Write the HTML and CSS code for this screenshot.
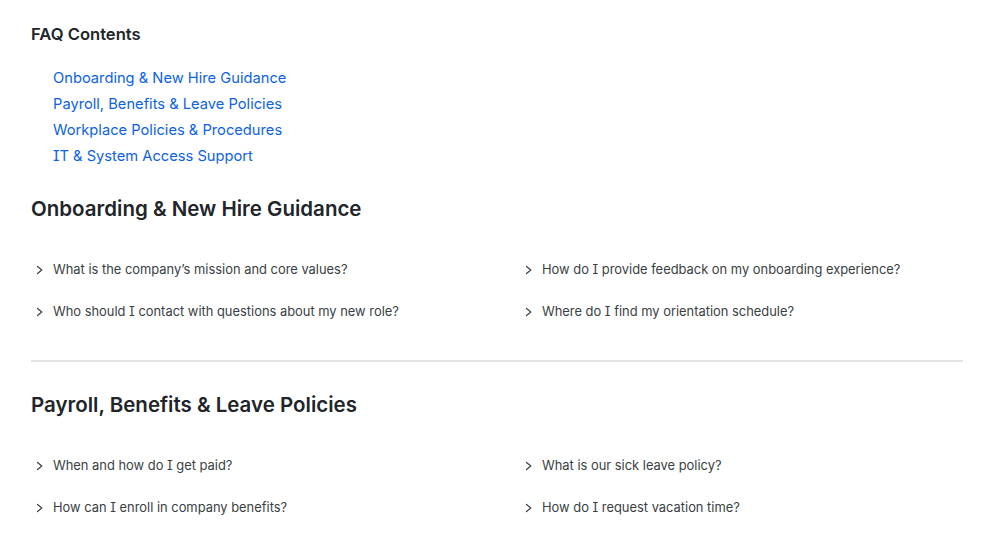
FILE: index.html
```html
<!DOCTYPE html>
<html lang="en">
<head>
<meta charset="utf-8">
<title>FAQ</title>
<link rel="stylesheet" href="styles.css">
</head>
<body>
<main class="page">
  <nav class="toc">
    <h3 class="toc-title">FAQ Contents</h3>
    <ul class="toc-list">
      <li><a href="#onboarding">Onboarding &amp; New Hire Guidance</a></li>
      <li><a href="#payroll">Payroll, Benefits &amp; Leave Policies</a></li>
      <li><a href="#workplace">Workplace Policies &amp; Procedures</a></li>
      <li><a href="#it">IT &amp; System Access Support</a></li>
    </ul>
  </nav>

  <section class="section" id="onboarding">
    <h2 class="section-title">Onboarding &amp; New Hire Guidance</h2>
    <div class="questions">
      <div class="q"><svg class="chev" viewBox="0 0 10 10"><path d="M2.5 1.5L6.8 5 2.5 8.5"/></svg><span>What is the company’s mission and core values?</span></div>
      <div class="q"><svg class="chev" viewBox="0 0 10 10"><path d="M2.5 1.5L6.8 5 2.5 8.5"/></svg><span>How do I provide feedback on my onboarding experience?</span></div>
      <div class="q"><svg class="chev" viewBox="0 0 10 10"><path d="M2.5 1.5L6.8 5 2.5 8.5"/></svg><span>Who should I contact with questions about my new role?</span></div>
      <div class="q"><svg class="chev" viewBox="0 0 10 10"><path d="M2.5 1.5L6.8 5 2.5 8.5"/></svg><span>Where do I find my orientation schedule?</span></div>
    </div>
  </section>

  <hr class="divider">

  <section class="section" id="payroll">
    <h2 class="section-title">Payroll, Benefits &amp; Leave Policies</h2>
    <div class="questions">
      <div class="q"><svg class="chev" viewBox="0 0 10 10"><path d="M2.5 1.5L6.8 5 2.5 8.5"/></svg><span>When and how do I get paid?</span></div>
      <div class="q"><svg class="chev" viewBox="0 0 10 10"><path d="M2.5 1.5L6.8 5 2.5 8.5"/></svg><span>What is our sick leave policy?</span></div>
      <div class="q"><svg class="chev" viewBox="0 0 10 10"><path d="M2.5 1.5L6.8 5 2.5 8.5"/></svg><span>How can I enroll in company benefits?</span></div>
      <div class="q"><svg class="chev" viewBox="0 0 10 10"><path d="M2.5 1.5L6.8 5 2.5 8.5"/></svg><span>How do I request vacation time?</span></div>
    </div>
  </section>
</main>
</body>
</html>
```
FILE: styles.css
```css
* { box-sizing: border-box; }
html, body { margin: 0; padding: 0; background: #fff; }
body {
  font-family: Inter, "Noto Sans", sans-serif;
  font-feature-settings: "cv08" 1;
  color: #212529;
}
.page {
  padding: 22px 36px 40px 31px;
}
.toc-title {
  margin: 0;
  font-size: 16.6px;
  font-weight: 600;
  line-height: 24px;
  color: #212529;
}
.toc-list {
  list-style: none;
  margin: 19px 0 0;
  padding: 0 0 0 22px;
}
.toc-list li {
  line-height: 26px;
  font-size: 14.7px;
}
.toc-list a {
  color: #0d63e0;
  text-decoration: none;
}
.section-title {
  margin: 0;
  font-size: 20.5px;
  font-weight: 600;
  line-height: 30px;
  color: #212529;
}
#onboarding { margin-top: 25px; }
.questions {
  display: grid;
  grid-template-columns: 1fr 1fr;
  column-gap: 46px;
  row-gap: 22px;
  margin-top: 36px;
}
.q {
  display: flex;
  align-items: center;
  gap: 8px;
  font-size: 12.9px;
  line-height: 20px;
  color: #3a3f44;
  padding-left: 4px;
}
.chev {
  width: 10px;
  height: 10px;
  fill: none;
  stroke: #3a3f44;
  stroke-width: 1.2;
  stroke-linecap: round;
  stroke-linejoin: round;
  flex: none;
}
.divider {
  border: 0;
  border-top: 2px solid #e2e3e5;
  margin: 38px 0 28px;
}
```
